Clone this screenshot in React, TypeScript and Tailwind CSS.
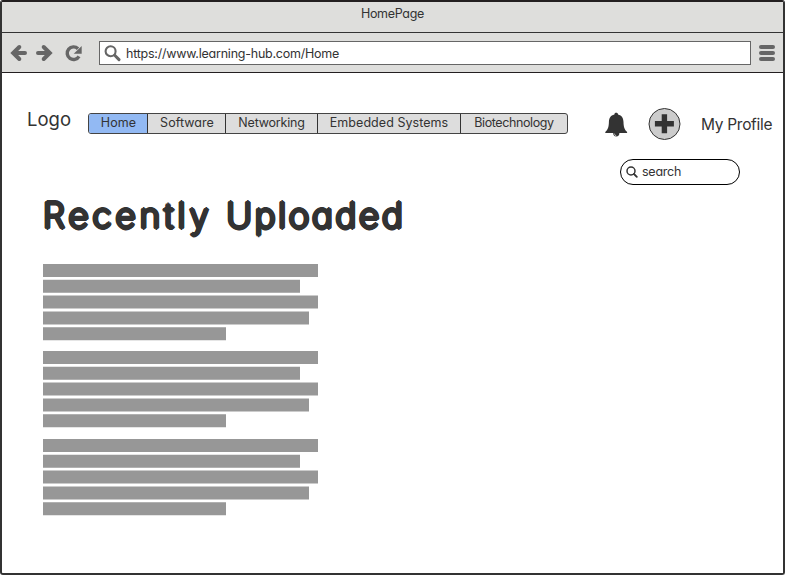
import React from "react";

const navItems = [
  { label: "Home", cell: "w-[58px] bg-[#92b9f3] pl-px", text: "tracking-[0.1px]" },
  { label: "Software", cell: "w-[78px] border-l border-[#333333] pl-px", text: "tracking-[0.05px]" },
  { label: "Networking", cell: "w-[92px] border-l border-[#333333]", text: "tracking-[-0.2px]" },
  { label: "Embedded Systems", cell: "w-[143px] border-l border-[#333333]", text: "tracking-[0.05px]" },
  { label: "Biotechnology", cell: "w-[107px] border-l border-[#333333]", text: "tracking-[-0.4px]" },
];

const lines = [
  "h-[13px] w-[275px]",
  "h-[14px] w-[257px] border-y border-t-[#e5e5e5] border-b-[#b0b0b0]",
  "h-[14px] w-[275px] border-y border-[#cbcbcb]",
  "h-[14px] w-[266px] border-y border-[#cbcbcb]",
  "h-[14px] w-[183px] border-y border-t-[#b0b0b0] border-b-[#e5e5e5]",
];

function Paragraph({ className }: { className: string }) {
  return (
    <div className={`flex flex-col gap-[2px] ${className}`}>
      {lines.map((line, i) => (
        <div key={i} className={`bg-[#979797] ${line}`} />
      ))}
    </div>
  );
}

function BrowserBar() {
  return (
    <div className="flex h-[40px] items-start border-b border-[#231f20] bg-[#dededc]">
      <svg className="mt-[8px] ml-[8px] shrink-0" width="76" height="24" viewBox="10 41 76 24" fill="none" stroke="#666666">
        <path d="M19.3 47 13.2 53l6.100 6M13.5 53H25" strokeWidth="4" strokeLinecap="round" />
        <path d="M43.700 47 49.8 53l-6.100 6M49.5 53H38" strokeWidth="4" strokeLinecap="round" />
        <path d="M78 48.800A6.300 6.300 0 1 0 79 56.300" strokeWidth="3.400" />
        <path d="M81.700 46v7.700h-8z" fill="#666666" stroke="none" />
      </svg>
      <div className="mt-[8px] ml-[13px] flex h-[24px] w-[652px] items-start border border-[#666666] bg-white">
        <svg className="mt-[3px] ml-[4px] shrink-0" width="17" height="17" viewBox="0 0 17 17" fill="none" stroke="#666666">
          <circle cx="6.6" cy="6.2" r="5" strokeWidth="2.1" />
          <path d="m10.7 10.3 4.3 4.3" strokeWidth="3" strokeLinecap="round" />
        </svg>
        <span className="mt-[3px] ml-[5px] text-[12.5px] leading-[17px] tracking-[-0.23px] whitespace-nowrap">
          https://www.learning-hub.com/Home
        </span>
      </div>
      <div className="mt-[12px] ml-[8px] flex w-[16px] flex-col gap-[2px]">
        <div className="h-[4px] rounded-full bg-[#666666]" />
        <div className="h-[4px] rounded-full bg-[#666666]" />
        <div className="h-[4px] rounded-full bg-[#666666]" />
      </div>
    </div>
  );
}

export default function App() {
  return (
    <div className="flex h-[575px] w-[785px] flex-col overflow-hidden rounded-[3px] border-2 border-[#333333] border-t-[#231f20] bg-white font-['Inter','Open_Sans',sans-serif] text-[#333333] [font-feature-settings:'cv11']">
      <div className="flex h-[31px] shrink-0 justify-center border-b border-[#333333] bg-[#dededc]">
        <span className="mt-[3px] text-[12.5px] leading-[17px] tracking-[-0.3px]">HomePage</span>
      </div>
      <BrowserBar />
      <header className="flex h-[86px] items-start whitespace-nowrap">
        <div className="mt-[34px] ml-[25px] w-[61px] text-[18.5px] leading-[24px]">Logo</div>
        <nav className="mt-[40px] flex h-[21px] w-[480px] overflow-hidden rounded-[3px] border border-[#444444] bg-[#dddddd] text-[12.5px] leading-[17px]">
          {navItems.map((item) => (
            <div key={item.label} className={`shrink-0 text-center ${item.cell}`}>
              <span className={item.text}>{item.label}</span>
            </div>
          ))}
        </nav>
        <svg className="mt-[39px] ml-[36px] shrink-0" width="24" height="26" viewBox="603.800 112 24 26">
          <path d="M616 112.700c1.200 0 1.800.7 1.800 1.700 4 .9 5.400 3.800 5.500 7.600.1 5 1 7.600 3.600 10v1h-21.800v-1c2.600-2.400 3.500-5 3.600-10 .1-3.800 1.500-6.700 5.500-7.600 0-1 .6-1.700 1.800-1.700z" fill="#333333" />
          <path d="M613 133h6.200a3.100 3.400 0 0 1-6.200 0z" fill="#333333" />
          <path d="M614.400 133.700c0 1.200.6 1.900 1.600 2" stroke="#ffffff" strokeWidth=".7" fill="none" />
        </svg>
        <svg className="mt-[34px] ml-[20px] shrink-0" width="34" height="34" viewBox="648 107 34 34">
          <circle cx="664.500" cy="124" r="15.500" fill="#cccccc" stroke="#333333" />
          <path d="M664.400 117v13.600M657.600 123.800h13.600" stroke="#333333" strokeWidth="5.400" strokeLinecap="square" />
        </svg>
        <span className="mt-[42px] ml-[19px] text-[15.5px] leading-[20px] tracking-[-0.3px]">My Profile</span>
      </header>
      <div className="flex shrink-0 justify-end pr-[43px]">
        <div className="flex h-[26px] w-[120px] items-start rounded-full border border-black">
          <svg className="mt-[6px] ml-[5px]" width="12" height="12" viewBox="0 0 12 12" fill="none" stroke="#333333">
            <circle cx="5" cy="5" r="4" strokeWidth="1.500" />
            <path d="m8 8 2.800 2.800" strokeWidth="1.800" strokeLinecap="round" />
          </svg>
          <span className="mt-[3px] ml-[4px] text-[12.5px] leading-[17px] tracking-[-0.25px]">search</span>
        </div>
      </div>
      <main className="ml-[41px]">
        <h1 className="mt-[5px] h-[50px] text-[35px] leading-[50px] font-extralight tracking-[3.950px] whitespace-nowrap [text-shadow:2px_0_#333333,-2px_0_#333333,0_2px_#333333,0_-2px_#333333,1.4px_1.4px_#333333,-1.4px_1.4px_#333333,1.4px_-1.4px_#333333,-1.4px_-1.4px_#333333,1px_0_#333333,-1px_0_#333333,0_1px_#333333,0_-1px_#333333]">
          Recently <span className="tracking-[2.800px]">Uploaded</span>
        </h1>
        <Paragraph className="mt-[24px]" />
        <Paragraph className="mt-[10px]" />
        <Paragraph className="mt-[11px]" />
      </main>
    </div>
  );
}
